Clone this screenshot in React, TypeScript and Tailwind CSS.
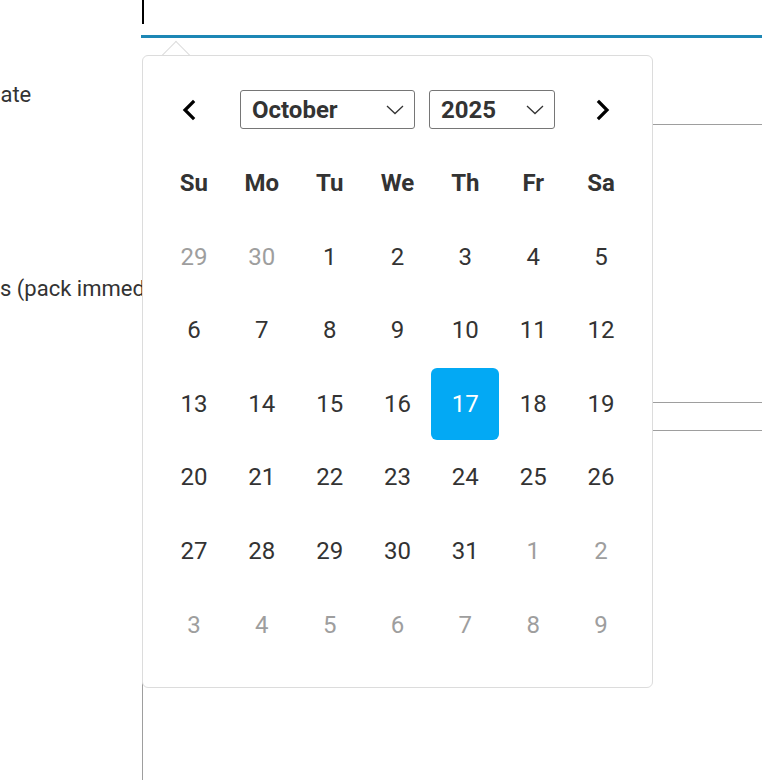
const font = { fontFamily: "Roboto, 'Noto Sans', sans-serif" }

type Day = { n: number; muted?: boolean; selected?: boolean }

const dayNames = ["Su", "Mo", "Tu", "We", "Th", "Fr", "Sa"]

function buildDays(): Day[] {
    const days: Day[] = [{ n: 29, muted: true }, { n: 30, muted: true }]
    for (let i = 1; i <= 31; i++) days.push({ n: i, selected: i === 17 })
    for (let i = 1; i <= 9; i++) days.push({ n: i, muted: true })
    return days
}

function Chevron({ dir }: { dir: "left" | "right" }) {
    return (
        <svg width="16" height="22" viewBox="0 0 16 22" fill="none">
            <polyline
                points={dir === "left" ? "12,3 4,11 12,19" : "4,3 12,11 4,19"}
                stroke="#000"
                strokeWidth="3.2"
                strokeLinecap="square"
            />
        </svg>
    )
}

function FakeSelect({ value, width }: { value: string; width: string }) {
    return (
        <div
            className={`${width} h-[39px] flex items-center justify-between border border-[#767676] rounded-[3px] pl-[11px] pr-[10px] bg-white`}
        >
            <span className="text-[24px] font-bold text-[#333] leading-none">{value}</span>
            <svg width="18" height="10" viewBox="0 0 18 10" fill="none">
                <polyline points="1,1 9,8.5 17,1" stroke="#333" strokeWidth="1.3" />
            </svg>
        </div>
    )
}

function DatePicker() {
    const days = buildDays()
    return (
        <div className="absolute left-[142px] top-[55px]">
            {/* arrow */}
            <div className="absolute left-[24px] -top-[10px] w-[20px] h-[20px] rotate-45 bg-white border-t border-l border-[#dcdcdc]" />
            <div className="relative w-[511px] h-[633px] bg-white border border-[#dcdcdc] rounded-[6px] px-[17px] pt-[34px]">
                <div className="flex items-center h-[39px]">
                    <div className="w-[58px] flex justify-center">
                        <Chevron dir="left" />
                    </div>
                    <div className="ml-[22px]">
                        <FakeSelect value="October" width="w-[175px]" />
                    </div>
                    <div className="ml-[14px]">
                        <FakeSelect value="2025" width="w-[126px]" />
                    </div>
                    <div className="ml-auto w-[64px] flex justify-center">
                        <Chevron dir="right" />
                    </div>
                </div>

                <div className="mt-[18px] grid grid-cols-7 auto-rows-[72px] gap-y-[1.6px]">
                    {dayNames.map((d) => (
                        <div key={d} className="flex items-center justify-center text-[24px] font-bold text-[#333]">
                            {d}
                        </div>
                    ))}
                    {days.map((d, i) => (
                        <div
                            key={i}
                            className={
                                d.selected
                                    ? "flex items-center justify-center text-[24px] rounded-[6px] bg-[#03a9f4] text-white"
                                    : d.muted
                                      ? "flex items-center justify-center text-[24px] text-[#9e9e9e]"
                                      : "flex items-center justify-center text-[24px] text-[#333]"
                            }
                        >
                            {d.n}
                        </div>
                    ))}
                </div>
            </div>
        </div>
    )
}

export default function App() {
    return (
        <div className="relative w-[762px] h-[780px] overflow-hidden bg-white" style={font}>
            <div className="grid grid-cols-[142px_1fr]">
                {/* Labels */}
                <div className="overflow-hidden text-[22px] text-[#333] whitespace-nowrap">
                    <div className="mt-[81px] -ml-[14px] h-[28px] leading-[28px]">Date</div>
                    <div className="mt-[166px] h-[28px] leading-[28px]">s (pack immediately)</div>
                </div>

                {/* Fields */}
                <div className="flex flex-col">
                    <div className="h-[35px] relative">
                        <div className="w-[2px] h-[24px] bg-black" />
                    </div>
                    <div className="h-[3px] bg-[#1d87b5] -ml-[1px]" />
                    <div className="h-[86px]" />
                    <div className="h-[279px] border-t border-l border-b border-[#9e9e9e]" />
                    <div className="h-[27px]" />
                    <div className="h-[400px] border-t border-l border-[#9e9e9e]" />
                </div>
            </div>

            <DatePicker />
        </div>
    )
}
